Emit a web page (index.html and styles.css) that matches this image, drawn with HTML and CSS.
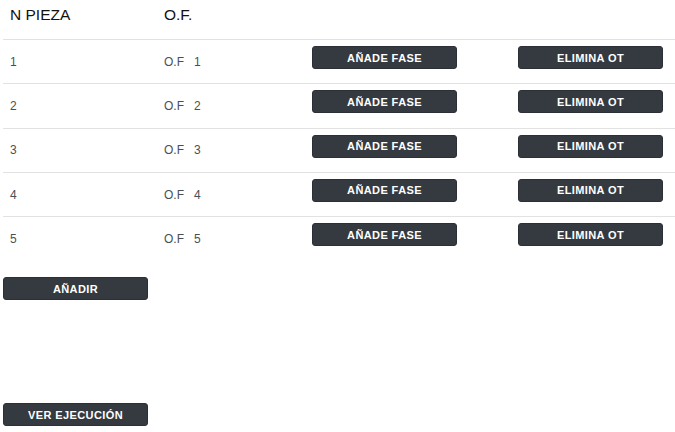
FILE: index.html
```html
<!DOCTYPE html>
<html lang="es">
<head>
<meta charset="utf-8">
<title>Piezas</title>
<link rel="stylesheet" href="styles.css">
</head>
<body>
<div class="page">
  <div class="table">
    <div class="row head">
      <div class="cell">N PIEZA</div>
      <div class="cell">O.F.</div>
      <div class="cell"></div>
      <div class="cell"></div>
    </div>
    <div class="row">
      <div class="cell txt">1</div>
      <div class="cell txt">O.F&nbsp;&nbsp; 1</div>
      <div class="cell"><button class="btn">AÑADE FASE</button></div>
      <div class="cell"><button class="btn">ELIMINA OT</button></div>
    </div>
    <div class="row">
      <div class="cell txt">2</div>
      <div class="cell txt">O.F&nbsp;&nbsp; 2</div>
      <div class="cell"><button class="btn">AÑADE FASE</button></div>
      <div class="cell"><button class="btn">ELIMINA OT</button></div>
    </div>
    <div class="row">
      <div class="cell txt">3</div>
      <div class="cell txt">O.F&nbsp;&nbsp; 3</div>
      <div class="cell"><button class="btn">AÑADE FASE</button></div>
      <div class="cell"><button class="btn">ELIMINA OT</button></div>
    </div>
    <div class="row">
      <div class="cell txt">4</div>
      <div class="cell txt">O.F&nbsp;&nbsp; 4</div>
      <div class="cell"><button class="btn">AÑADE FASE</button></div>
      <div class="cell"><button class="btn">ELIMINA OT</button></div>
    </div>
    <div class="row">
      <div class="cell txt">5</div>
      <div class="cell txt">O.F&nbsp;&nbsp; 5</div>
      <div class="cell"><button class="btn">AÑADE FASE</button></div>
      <div class="cell"><button class="btn">ELIMINA OT</button></div>
    </div>
  </div>
  <div class="actions">
    <button class="btn">AÑADIR</button>
  </div>
  <div class="footer">
    <button class="btn">VER EJECUCIÓN</button>
  </div>
</div>
</body>
</html>
```
FILE: styles.css
```css
html, body {
  margin: 0;
  padding: 0;
  background: #fff;
}
body {
  font-family: "Liberation Sans", Arial, sans-serif;
  color: #212529;
}
.page {
  padding-left: 3px;
}
.table {
  display: flex;
  flex-direction: column;
}
.row {
  display: grid;
  grid-template-columns: 154px 148px 206px 1fr;
  height: 44.3px;
  border-bottom: 1px solid #e2e2e2;
  box-sizing: border-box;
}
.row:last-child {
  border-bottom: none;
}
.row.head {
  height: 40px;
  border-bottom: 1.5px solid #e2e2e2;
}
.head .cell {
  font-size: 15.5px;
  color: #111;
  padding: 6px 7px 0;
}
.cell {
  padding: 6px 7px 0;
}
.cell.txt {
  font-size: 12px;
  color: #4a4f55;
  padding-top: 0;
  display: flex;
  align-items: center;
}
.btn {
  display: block;
  width: 145px;
  height: 23px;
  margin: 0;
  padding: 0;
  border: 1px solid #2c3036;
  border-radius: 3px;
  background: #343a40;
  color: #fff;
  font-family: "Liberation Sans", Arial, sans-serif;
  font-weight: bold;
  font-size: 11px;
  letter-spacing: 0.4px;
  text-align: center;
  cursor: pointer;
}
.actions {
  padding-top: 16px;
}
.footer {
  padding-top: 103px;
}
```
